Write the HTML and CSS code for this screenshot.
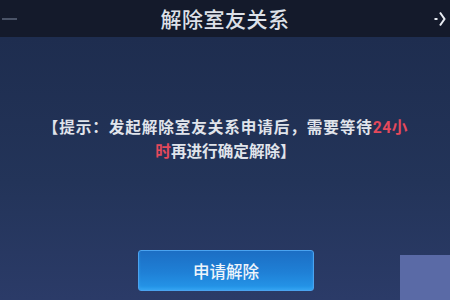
FILE: index.html
```html
<!DOCTYPE html>
<html lang="zh">
<head>
<meta charset="utf-8">
<link rel="stylesheet" href="styles.css">
</head>
<body>
<div class="screen">
  <header class="topbar">
    <span class="dash"></span>
    <h1 class="title">解除室友关系</h1>
    <svg class="exit" width="14" height="18" viewBox="0 0 14 18">
      <line x1="1.5" y1="9" x2="4.5" y2="9" stroke="#e8ecf2" stroke-width="2"/>
      <polyline points="7,2.5 11.5,9 7,15.5" fill="none" stroke="#e8ecf2" stroke-width="2"/>
    </svg>
  </header>
  <main class="content">
    <p class="notice"><span class="wide">【提示：发起解除室友关系申请后，需要等待<span class="hl num">24</span><span class="hl">小</span></span><br><span class="hl">时</span>再进行确定解除】</p>
    <button class="btn">申请解除</button>
  </main>
  <div class="corner"></div>
</div>
</body>
</html>
```
FILE: styles.css
```css
* { box-sizing: border-box; margin: 0; padding: 0; }
html, body { width: 450px; height: 300px; overflow: hidden; }
body { font-family: "Noto Sans CJK SC", "Noto Sans", sans-serif; background: #1f2e50; }
.screen { position: relative; width: 450px; height: 300px; display: flex; flex-direction: column; }
.topbar {
  height: 37px;
  background: #141a2b;
  display: flex;
  align-items: center;
  justify-content: space-between;
  padding: 0 3px 0 2px;
}
.dash { width: 15px; height: 2px; background: #4a5367; }
.title {
  font-size: 21px;
  font-weight: 500;
  color: #dde1e8;
  letter-spacing: 0.5px;
  line-height: 1;
  margin-left: 0;
}
.exit { display: block; }
.content {
  flex: 1;
  background: linear-gradient(180deg, #1e2d4f 0%, #233459 55%, #2b3b68 100%);
  display: flex;
  flex-direction: column;
  align-items: center;
  padding-top: 78px;
}
.notice {
  color: #e0e4eb;
  font-size: 15.6px;
  font-weight: 700;
  line-height: 22px;
  text-align: center;
  width: 420px;
  margin-left: 1px;
}
.wide { letter-spacing: 0.9px; }
.hl { color: #e5495b; }
.num { font-family: "Roboto", sans-serif; font-weight: 700; letter-spacing: 0.6px; }
.btn {
  margin-top: 89px;
  width: 176px;
  height: 41px;
  border: 1px solid #4aa3f0;
  border-radius: 3px;
  background: linear-gradient(180deg, #1c6ec4 0%, #1f80d6 55%, #2597ea 100%);
  color: #eef4fb;
  font-family: inherit;
  font-size: 16.5px;
  font-weight: 500;
  margin-left: 2px;
  box-shadow: inset 0 -2px 3px rgba(80,190,255,0.35);
}
.corner {
  position: absolute;
  left: 400px;
  top: 255px;
  width: 50px;
  height: 45px;
  background: #5a6aa6;
}
```
